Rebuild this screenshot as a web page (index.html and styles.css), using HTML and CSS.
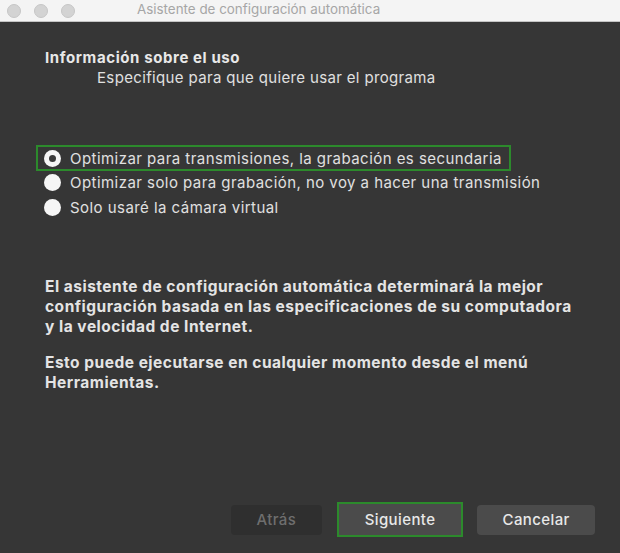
FILE: index.html
```html
<!DOCTYPE html>
<html lang="es">
<head>
<meta charset="utf-8">
<link rel="stylesheet" href="styles.css">
</head>
<body>
<div class="window">
  <div class="titlebar">
    <div class="lights"><span class="light"></span><span class="light"></span><span class="light"></span></div>
    <div class="title">Asistente de configuración automática</div>
  </div>
  <div class="content">
    <div class="heading">Información sobre el uso</div>
    <div class="subheading">Especifique para que quiere usar el programa</div>
    <div class="options">
      <div class="option focused"><span class="radio checked"></span><span>Optimizar para transmisiones, la grabación es secundaria</span></div>
      <div class="option"><span class="radio"></span><span>Optimizar solo para grabación, no voy a hacer una transmisión</span></div>
      <div class="option"><span class="radio"></span><span>Solo usaré la cámara virtual</span></div>
    </div>
    <p class="info">El asistente de configuración automática determinará la mejor configuración basada en las especificaciones de su computadora y la velocidad de Internet.</p>
    <p class="info second">Esto puede ejecutarse en cualquier momento desde el menú Herramientas.</p>
  </div>
  <div class="buttons">
    <button class="btn disabled">Atrás</button>
    <button class="btn primary">Siguiente</button>
    <button class="btn">Cancelar</button>
  </div>
</div>
</body>
</html>
```
FILE: styles.css
```css
html, body {
  margin: 0;
  padding: 0;
  background: #363636;
}
.window {
  width: 620px;
  height: 553px;
  display: flex;
  flex-direction: column;
  font-family: Inter, "Noto Sans", sans-serif;
  color: #e0e0e0;
  overflow: hidden;
}
.titlebar {
  height: 21px;
  background: #f4f4f4;
  border-bottom: 1px solid #c4c4c4;
  display: flex;
  align-items: center;
  position: relative;
  flex: none;
}
.lights {
  display: flex;
  gap: 13px;
  padding-left: 7px;
}
.light {
  width: 12px;
  height: 12px;
  border-radius: 50%;
  background: #d3d3d3;
  border: 0.5px solid #c6c6c6;
}
.title {
  position: absolute;
  left: 137px;
  top: 0;
  bottom: 0;
  line-height: 19px;
  font-size: 13.4px;
  color: #a6a6a6;
  white-space: nowrap;
}
.content {
  flex: 1;
  padding: 26px 0 0 45px;
}
.heading {
  font-weight: 700;
  font-size: 15px;
  letter-spacing: 0.6px;
  line-height: 20px;
  color: #e8e8e8;
}
.subheading {
  font-size: 15px;
  letter-spacing: 0.35px;
  line-height: 20px;
  padding-left: 52px;
}
.options {
  margin-top: 57px;
  margin-left: -9px;
  display: flex;
  flex-direction: column;
  gap: 0.5px;
}
.option {
  box-sizing: border-box;
  display: flex;
  align-items: center;
  gap: 9px;
  height: 24px;
  padding-left: 6px;
  font-size: 15px;
  letter-spacing: 0.45px;
  border: 2px solid transparent;
  width: 475px;
  white-space: nowrap;
}
.option.focused {
  border-color: #2c8a2c;
  height: 26px;
  margin-bottom: -1px;
}
.radio {
  width: 17px;
  height: 17px;
  border-radius: 50%;
  background: #f6f6f6;
  position: relative;
  flex: none;
}
.radio.checked::after {
  content: "";
  position: absolute;
  left: 5px;
  top: 5px;
  width: 7px;
  height: 7px;
  border-radius: 50%;
  background: #3a3a3a;
}
.info {
  margin: 58px 0 0 0;
  width: 540px;
  font-weight: 700;
  font-size: 15.5px;
  letter-spacing: 0.5px;
  line-height: 20px;
  color: #e4e4e4;
}
.info.second {
  margin-top: 16px;
}
.buttons {
  flex: none;
  display: flex;
  align-items: center;
  padding: 0 25px 16px 231px;
}
.btn {
  font-family: Inter, "Noto Sans", sans-serif;
  font-size: 15px;
  font-weight: 500;
  letter-spacing: 0.4px;
  color: #e8e8e8;
  background: #4b4b4b;
  border: none;
  border-radius: 4px;
  height: 30px;
  padding: 0;
}
.btn.disabled {
  width: 91px;
  background: #2f2f2f;
  color: #6e6e6e;
}
.btn.primary {
  width: 127px;
  height: 35px;
  margin-left: 15px;
  border: 2px solid #2c8a2c;
  border-radius: 0;
}
.btn:last-child {
  width: 118px;
  margin-left: 14px;
}
```
